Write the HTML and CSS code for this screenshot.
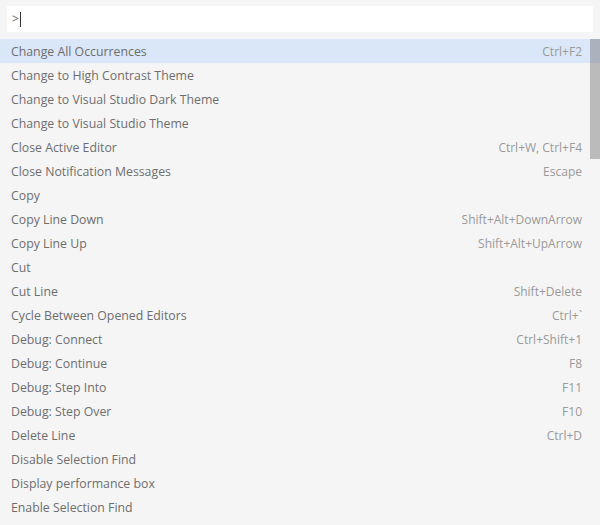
FILE: index.html
```html
<!DOCTYPE html>
<html>
<head>
<meta charset="utf-8">
<link rel="stylesheet" href="styles.css">
</head>
<body>
<div class="palette">
  <div class="input-row">
    <div class="input"><span class="prompt">&gt;</span><span class="caret"></span></div>
  </div>
  <div class="list-wrap">
    <ul class="list">
      <li class="item selected"><span class="label">Change All Occurrences</span><span class="key">Ctrl+F2</span></li>
      <li class="item"><span class="label">Change to High Contrast Theme</span></li>
      <li class="item"><span class="label">Change to Visual Studio Dark Theme</span></li>
      <li class="item"><span class="label">Change to Visual Studio Theme</span></li>
      <li class="item"><span class="label">Close Active Editor</span><span class="key">Ctrl+W, Ctrl+F4</span></li>
      <li class="item"><span class="label">Close Notification Messages</span><span class="key">Escape</span></li>
      <li class="item"><span class="label">Copy</span></li>
      <li class="item"><span class="label">Copy Line Down</span><span class="key">Shift+Alt+DownArrow</span></li>
      <li class="item"><span class="label">Copy Line Up</span><span class="key">Shift+Alt+UpArrow</span></li>
      <li class="item"><span class="label">Cut</span></li>
      <li class="item"><span class="label">Cut Line</span><span class="key">Shift+Delete</span></li>
      <li class="item"><span class="label">Cycle Between Opened Editors</span><span class="key">Ctrl+`</span></li>
      <li class="item"><span class="label">Debug: Connect</span><span class="key">Ctrl+Shift+1</span></li>
      <li class="item"><span class="label">Debug: Continue</span><span class="key">F8</span></li>
      <li class="item"><span class="label">Debug: Step Into</span><span class="key">F11</span></li>
      <li class="item"><span class="label">Debug: Step Over</span><span class="key">F10</span></li>
      <li class="item"><span class="label">Delete Line</span><span class="key">Ctrl+D</span></li>
      <li class="item"><span class="label">Disable Selection Find</span></li>
      <li class="item"><span class="label">Display performance box</span></li>
      <li class="item"><span class="label">Enable Selection Find</span></li>
    </ul>
    <div class="scrollbar"></div>
  </div>
</div>
</body>
</html>
```
FILE: styles.css
```css
html, body {
  margin: 0;
  padding: 0;
  background: #f5f5f5;
  width: 600px;
  height: 525px;
  overflow: hidden;
  font-family: "Open Sans", "Noto Sans", sans-serif;
}
.palette {
  display: flex;
  flex-direction: column;
}
.input-row {
  padding: 6px 7px 0 7px;
}
.input {
  height: 26px;
  background: #ffffff;
  display: flex;
  align-items: center;
  padding-left: 5px;
  font-size: 12px;
  color: #6a6a6a;
}
.prompt {
  line-height: 14px;
}
.caret {
  width: 1px;
  height: 15px;
  background: #333;
  margin-left: 1px;
}
.list-wrap {
  position: relative;
  margin-top: 7px;
}
.list {
  list-style: none;
  margin: 0;
  padding: 0;
}
.item {
  height: 24px;
  display: flex;
  align-items: center;
  justify-content: space-between;
  padding: 0 18px 0 11px;
}
.item.selected {
  background: #dae7f8;
}
.label {
  font-size: 12.3px;
  color: #6e6e6e;
}
.key {
  font-size: 12px;
  color: #9a9a9a;
}
.scrollbar {
  position: absolute;
  top: 0;
  right: 0;
  width: 10px;
  height: 120px;
  background: rgba(100, 100, 100, 0.4);
}
```
